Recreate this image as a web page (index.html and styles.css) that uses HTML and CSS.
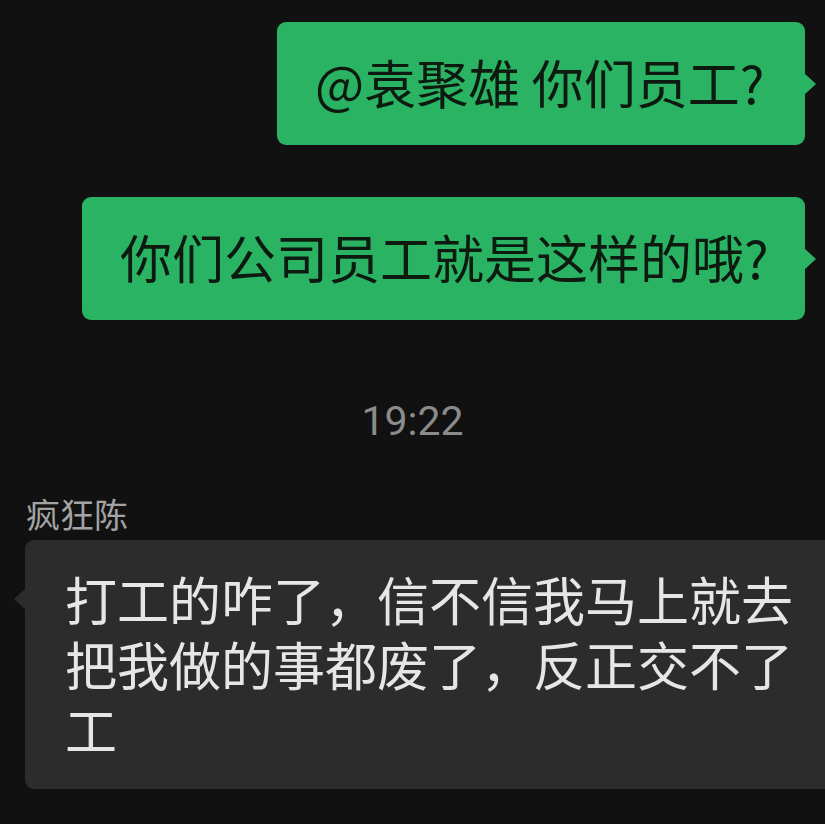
FILE: index.html
```html
<!DOCTYPE html>
<html lang="zh-CN">
<head>
  <meta charset="UTF-8" />
  <meta name="viewport" content="width=device-width, initial-scale=1.0"/>
  <title>聊天记录</title>
  <link rel="stylesheet" href="styles.css">
</head>
<body>

  <div class="chat">
    <div class="row mine">
      <div class="bubble green first">@袁聚雄 你们员工?</div>
    </div>

    <div class="row mine">
      <div class="bubble green second">你们公司员工就是这样的哦?</div>
    </div>

    <div class="time">19:22</div>

    <div class="row theirs">
      <div class="name">疯狂陈</div>
      <div class="bubble gray">打工的咋了，信不信我马上就去把我做的事都废了，反正交不了工</div>
    </div>
  </div>

</body>
</html>
```

FILE: styles.css
```css
body {
  margin: 0;
  background: #111111;
  font-family: "Noto Sans CJK SC", "Noto Sans", sans-serif;
  overflow: hidden;
}
.chat {
  display: flex;
  flex-direction: column;
  padding-top: 22px;
}
.row {
  display: flex;
  flex-direction: column;
}
.mine {
  align-items: flex-end;
  padding-right: 20px;
}
.mine + .mine {
  margin-top: 52px;
}
.bubble {
  position: relative;
  border-radius: 9px;
  font-size: 52px;
  line-height: 64px;
  box-sizing: border-box;
}
.green {
  background: #2bb364;
  color: #0d1a10;
  padding: 28px 20px 31px 38px;
  white-space: nowrap;
}
.green.first {
  width: 528px;
}
.green.second {
  width: 723px;
}
.green::after {
  content: "";
  position: absolute;
  right: -11px;
  top: 50%;
  margin-top: -11px;
  border-left: 12px solid #2bb364;
  border-top: 11px solid transparent;
  border-bottom: 11px solid transparent;
}
.time {
  text-align: center;
  color: #8b8b8b;
  font-family: "Roboto", "Noto Sans", sans-serif;
  font-size: 41px;
  margin-top: 78px;
  line-height: 46px;
}
.theirs {
  padding-left: 25px;
  margin-top: 50px;
}
.name {
  color: #a3a3a3;
  font-size: 34px;
  line-height: 40px;
  margin-left: 1px;
  margin-bottom: 6px;
}
.gray {
  background: #2c2c2c;
  color: #e6e6e6;
  width: 800px;
  font-size: 52px;
  line-height: 65px;
  padding: 26px 20px 28px 40px;
  border-radius: 9px 0 0 9px;
}
.gray::before {
  content: "";
  position: absolute;
  left: -11px;
  top: 48px;
  border-right: 12px solid #2c2c2c;
  border-top: 11px solid transparent;
  border-bottom: 11px solid transparent;
}
```
